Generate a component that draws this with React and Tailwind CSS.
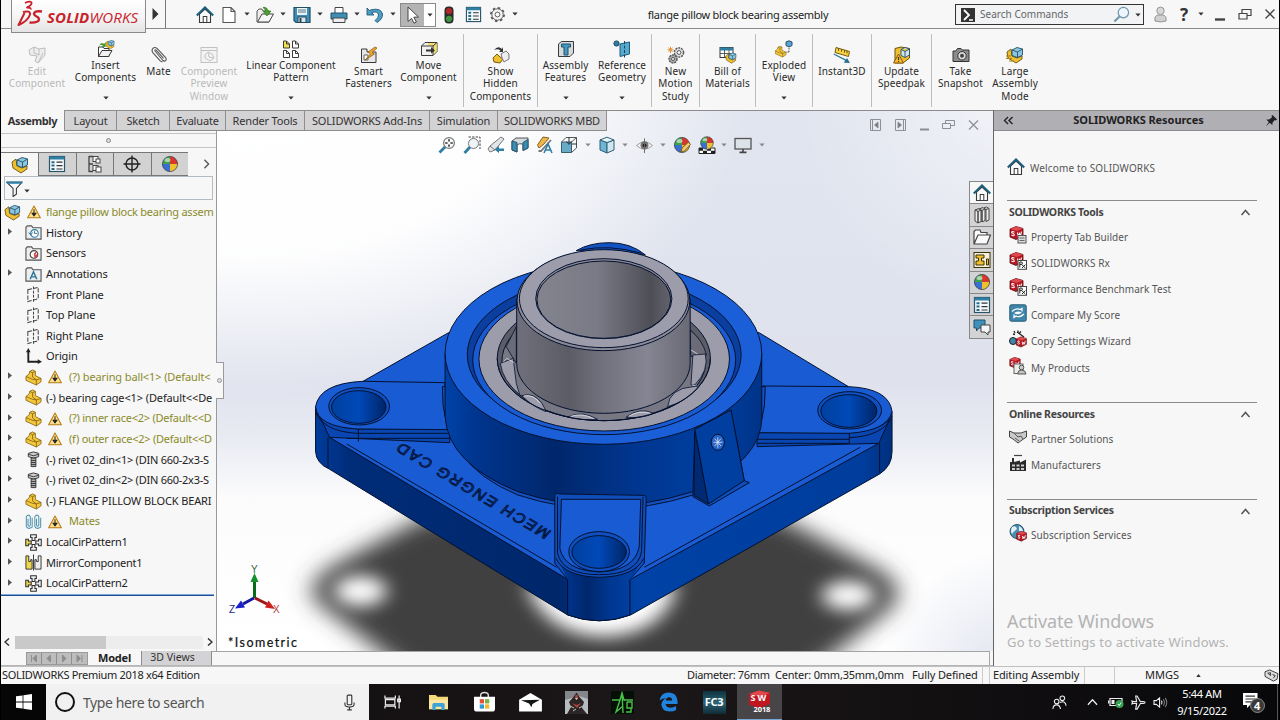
import React from "react";

// ICONS - all drawn on an 18x18 grid

const teal = "#2f7fa3";
const ink = "#3a3a3a";
const yellow = "#f0c030";

const PartShape = () => (
  <g stroke="#7a5a10" strokeWidth="0.8" strokeLinejoin="round">
    <path d="M1 8 L4.5 5 L5 2.5 L8 1 L11 2.5 V7 L17 10 V13.5 L12 17 L1 12Z" fill="#f3c73c" />
    <path d="M5 2.5 L8 4 L11 2.5 M8 4 V8.5 L12 11.5 L17 10 M12 11.5 V17 M1 8 L8 11 L12 11.5" fill="none" />
  </g>
);

const AssemblyShape = () => (
  <g strokeLinejoin="round">
    <path d="M1 6 L5 3 L6 10 L11 12 L16 10 V13 L10 17 L2 12Z" fill="#f0bf2f" stroke="#6b4f0c" strokeWidth="0.9" />
    <path d="M6 4 L11 1.5 L16.5 3 V9 L11.5 11.5 L6 9.5Z" fill="#8cc7e2" stroke="#244f66" strokeWidth="0.9" />
    <path d="M6 4 L11.5 6 L16.5 3 M11.5 6 V11.5" fill="none" stroke="#244f66" strokeWidth="0.9" />
  </g>
);

const SwCube = () => (
  <g>
    <path d="M1 3 L7 0.5 L14 2.5 V10 L7 13.5 L1 11Z" fill="#b5161f" stroke="#5e0a10" strokeWidth="0.8" />
    <path d="M1 3 L8 5 L14 2.5 L7 0.5Z" fill="#dd4a50" />
    <path d="M5.5 6.2 q-3 -1.5 -2.8 0.6 q2.8 1 2.6 2.4 q-0.8 1.2 -2.8 -0.2 M8.5 6.5 l0.8 4 l1.2 -3 l1 2.4 l1 -4.4" stroke="#fff" strokeWidth="1.1" fill="none" />
  </g>
);

const BallShape = () => (
  <g>
    <circle cx="9" cy="9" r="7.6" fill="#2f62bf" />
    <path d="M9 9 V1.4 A7.6 7.6 0 0 0 1.4 9Z" fill="#3ea24a" />
    <path d="M9 9 V1.4 A7.6 7.6 0 0 1 16.6 9Z" fill="#d8352c" />
    <path d="M9 9 H1.4 A7.6 7.6 0 0 0 9 16.6Z" fill="#3a6fd0" />
    <path d="M9 9 H16.6 A7.6 7.6 0 0 1 9 16.6Z" fill="#edc02d" />
    <ellipse cx="6.5" cy="5" rx="3" ry="2" fill="#fff" opacity="0.55" />
    <circle cx="9" cy="9" r="7.6" fill="none" stroke="#444" strokeWidth="0.7" />
  </g>
);

// four small brackets around an open centre
const CirPatternShape = () => (
  <g stroke="#2e2e2e" strokeWidth="1.1" fill="#eee">
    <path d="M6 0.8 h6 v3 h-1.5 v3 h-3 v-3 h-1.5z" />
    <path d="M6 17.2 h6 v-3 h-1.5 v-3 h-3 v3 h-1.5z" />
    <path d="M0.8 5.5 h2.8 v2 h3 v3 h-3 v2 h-2.8z" fill="#ecd94d" />
    <path d="M17.2 5.5 h-2.8 v2 h-3 v3 h3 v2 h2.8z" />
  </g>
);

const ListShape = () => (
  <g>
    <rect x="1.5" y="1.5" width="15" height="15" fill="#f4fafc" stroke="#2c5468" strokeWidth="1.2" />
    <rect x="1.5" y="1.5" width="15" height="3" fill={teal} />
    <path d="M3.5 6.2h3v2h-3z M3.5 9.6h3v2h-3z M3.5 13h3v2h-3z" fill="#2a6884" />
    <path d="M8.5 7.2h6 M8.5 10.6h6 M8.5 14h6" stroke="#333" strokeWidth="1.2" />
  </g>
);

const FolderShape = () => (
  <path d="M1 16 V3.5 L2.5 2 H7 L8.5 4 H17 V16Z" fill="#eceef0" stroke="#555" strokeWidth="1.2" />
);

const glyphs = {
  home: (
    <g>
      <path d="M3.5 8 V16.5 H14.5 V8 L9 3Z" fill="#fafafa" stroke={ink} strokeWidth="1.1" />
      <path d="M0.8 9.5 L9 1.5 L17.2 9.5" fill="none" stroke="#1f5f7b" strokeWidth="2.2" />
      <rect x="7.2" y="10.5" width="3.6" height="6" fill="#fff" stroke={ink} />
    </g>
  ),
  page: <path d="M3 1.5 H11 L15 5.5 V16.5 H3Z M11 1.5 V5.5 H15" fill="#fff" stroke="#555" strokeWidth="1.1" />,
  open: (
    <g>
      <path d="M1 16 V5 L3 3 H6 L7 5 H13 V16Z" fill="#eee" stroke="#555" />
      <path d="M1.5 16 L6 8 H17.5 L13 16Z" fill="#f6f6f6" stroke="#444" />
      <path d="M7 1.5 Q11 0.5 12 5 H15 L11 10 L7.2 5.5 H9.5 Q9.5 3 7 1.5Z" fill="#4aa32f" stroke="#2a6a18" strokeWidth="0.6" />
    </g>
  ),
  save: (
    <g>
      <path d="M1 1.5 H17 V16.5 H3 L1 14.5Z" fill="#3f8fb5" stroke="#1f4e66" strokeWidth="1.2" />
      <rect x="4" y="2" width="10" height="7" fill="#e9f3f8" />
      <path d="M5 4h8M5 6h8" stroke="#4c6a78" strokeWidth="0.9" />
      <rect x="5" y="11" width="8" height="5.5" fill="#dfe6ea" stroke="#24495c" />
      <rect x="6.5" y="12" width="2" height="4" fill="#24495c" />
    </g>
  ),
  print: (
    <g>
      <path d="M5 7 V1.5 H13 V7" fill="#fff" stroke="#444" />
      <path d="M1 7 H17 V13 H1Z" fill="#3f8fb5" stroke="#1f4e66" />
      <path d="M3 12 H15 V16.5 H3Z" fill="#eee" stroke="#444" />
    </g>
  ),
  undo: <path d="M1 2 V9 H8 L5.5 6.6 Q12 4.5 12.5 9 Q12.5 12 9 14.5 L11 16.5 Q17 13 16.5 8 Q15 1.5 5 3.8 L3.5 4.5Z" fill="#4d9dc4" stroke="#1f5b7a" strokeWidth="0.9" />,
  cursor: <path d="M4 1 L14.5 11 L9.8 11.2 L12.4 16 L10 17.2 L7.6 12.4 L4 15.5Z" fill="#fff" stroke="#444" strokeWidth="1" />,
  traffic: (
    <g>
      <rect x="4.5" y="0.5" width="9" height="17" rx="4" fill="#2b2b2b" />
      <circle cx="9" cy="5" r="3.1" fill="#b3262b" />
      <circle cx="9" cy="12.8" r="3.1" fill="#3f9440" />
    </g>
  ),
  list: <ListShape />,
  gear: (
    <g fill="none" stroke="#555">
      <circle cx="9" cy="9" r="7" strokeWidth="1.8" strokeDasharray="2.7 2.8" />
      <circle cx="9" cy="9" r="6" fill="#f7f7f7" strokeWidth="1" />
      <circle cx="9" cy="9" r="2.6" />
    </g>
  ),
  editComponent: (
    <g fill="#ededed" stroke="#bdbdbd">
      <path d="M1 4 L6 1 L11 3 L17 2 L17 9 L10 17 L7 15 L9 10 L2 9Z" />
      <path d="M6 1 V7 L11 9 M10 17 L15 7 M11 3 V9" fill="none" />
    </g>
  ),
  insertComponents: (
    <g>
      <path d="M1.5 16.5 V7 H6 L7 8.5 H12 V16.5Z" fill="#fff" stroke={ink} />
      <path d="M1.5 16.5 L5 10.5 H15 L11.5 16.5Z" fill="#f1f1f1" stroke={ink} />
      <path d="M2 6 Q4 1 7 4 L8.5 2.5 V7 H4.5 L6 5.5 Q4 4 2 6Z" fill="#3f9a2a" />
      <g transform="translate(8 -0.5) scale(0.55)">
        <AssemblyShape />
      </g>
    </g>
  ),
  mate: <path d="M5 5 L12.5 14 Q14.5 16 15.8 14.4 Q16.8 13 15.2 11 L7 2.4 Q4.6 0.6 2.8 2.6 Q1.2 4.5 3 6.8 L10 14.6 Q11.5 16 12.4 15.6 M5 5 Q4.5 3.6 6 4 L13.5 12.4" fill="none" stroke="#555" strokeWidth="1.1" />,
  previewWindow: (
    <g fill="#f3f3f3" stroke="#c2c2c2">
      <rect x="1" y="1.5" width="16" height="15" />
      <path d="M1 4.5h16" />
      <path d="M5 9 L8 6 L12 8 L14 12 L10 15 L5 12Z M8 6 L9 11 L14 12" />
    </g>
  ),
  linearPattern: (
    <g stroke="#3b3b3b" strokeWidth="1" fill="#fff">
      <path d="M1.5 1 h3 l3 3 v4 h-6z" fill="#f0e04f" />
      <path d="M10.5 1 h3 l3 3 v4 h-6z M1.5 10.500 h3 l3 3 v4 h-6z M10.5 10.500 h3 l3 3 v4 h-6z" />
      <path d="M4.5 1 v3 h3 M13.5 1 v3 h3 M4.5 10.500 v3 h3 M13.5 10.500 v3 h3" fill="none" />
    </g>
  ),
  smartFasteners: (
    <g>
      <path d="M1.5 16.5 V3 H7 V6 H16 V16.5Z" fill="#e6e6e6" stroke={ink} />
      <path d="M4 9 h4 v5 h-4z" fill="#fff" stroke="#666" />
      <path d="M15 1 L8 6 L10.5 8 L5 14 L14.5 8 L12 6.5 L17 2Z" fill="#f0a52f" stroke="#83530d" strokeWidth="0.7" />
    </g>
  ),
  moveComponent: (
    <g>
      <path d="M1.5 6 L5 2.5 H17 V11.5 L13 15.5 H1.5Z" fill="#f1f1f1" stroke={ink} />
      <path d="M8 3 H17 V11 L13 15 V6 H8Z" fill="#f2dc55" opacity="0.8" />
      <path d="M1.5 6 H13 V15.5 M13 6 L17 2.5" fill="none" stroke={ink} />
      <path d="M6 9.500 H11 V7 L15 10.500 L11 13.500 V11.500 H6Z" fill="#333" />
    </g>
  ),
  showHidden: (
    <g>
      <path d="M2 4 Q6 -1 10 3 L11 1 V6 H7 L8.5 4.6 Q5.5 2.2 2 4Z" fill="#333" />
      <path d="M1 12 L5 8 L8 11 L11 13 L8 17 L2 16Z" fill="#f0bf2f" stroke="#7a5a10" />
      <path d="M9 8 L14 5 L17 8 V13 L12 16 L10 12Z" fill="#eee" stroke="#777" />
    </g>
  ),
  assemblyFeatures: (
    <g>
      <path d="M1.5 4 L4.5 1.5 H16.5 V13 L13 16.5 H1.5Z" fill="#d6dadd" stroke={ink} />
      <path d="M4.5 4 H13.5 V7 H11 V15 H7 V7 H4.5Z" fill="#4798bd" stroke="#1f526b" />
    </g>
  ),
  referenceGeometry: (
    <g>
      <circle cx="3.5" cy="3.5" r="2.6" fill={teal} stroke="#1d4a60" />
      <path d="M7 4 L16.5 2 V14 L7 16.5Z" fill="#56a9cf" stroke="#1f5b7a" />
      <path d="M11.5 1 V17.5" stroke="#174257" strokeDasharray="3 1.5" />
    </g>
  ),
  motionStudy: (
    <g fill="#ddd" stroke="#555">
      <circle cx="12" cy="6.5" r="4.6" strokeWidth="1.4" strokeDasharray="2 0.9" />
      <circle cx="12" cy="6.5" r="1.9" fill="#fff" />
      <circle cx="6" cy="13" r="4" strokeWidth="1.4" strokeDasharray="2 0.9" fill="#aaa" />
      <circle cx="6" cy="13" r="1.5" fill="#fff" />
      <path d="M3.5 0.8 V7 M0.5 3.8 H6.6 M1.4 1.6 L5.6 6 M5.6 1.6 L1.4 6" stroke="#e08b2a" strokeWidth="0.9" />
    </g>
  ),
  billOfMaterials: (
    <g>
      <rect x="1" y="1.5" width="13" height="10" fill="#fff" stroke={ink} />
      <rect x="1" y="1.5" width="13" height="3" fill={teal} />
      <path d="M1 7.5h13 M5.5 4v7.5 M10 4v7.5" stroke={ink} strokeWidth="0.8" />
      <g transform="translate(6 6) scale(0.66)">
        <AssemblyShape />
      </g>
    </g>
  ),
  explodedView: (
    <g>
      <g transform="translate(-0.5 5.5) scale(0.68)">
        <PartShape />
      </g>
      <path d="M11 2 L14 0.8 L17 2 V5.5 L14 7 L11 5.5Z" fill="#5aa6d0" stroke="#235069" />
      <path d="M14 8 V13 M14 12 H11" stroke="#555" strokeDasharray="1.5 1" />
    </g>
  ),
  instant3d: (
    <g>
      <path d="M3 1.5 L16.5 5.5 L15.5 10.5 L2 6.5Z" fill="#f4d53f" stroke="#7a5a10" />
      <path d="M5.5 2.4 v2.4 M8.5 3.3 v2.4 M11.5 4.2 v2.4 M14 5 v2.4" stroke="#6b4f0c" />
      <path d="M0.5 8.5 L12 14.5 L11 16.8 L17 17 L14 12 L13 13.5 L1 7.5Z" fill="#2b7097" />
    </g>
  ),
  updateSpeedpak: (
    <g>
      <path d="M2 2.500 L8 1 L16.500 2.500 V12 L10 17 H2Z" fill="#f0bf2f" stroke="#6b4f0c" />
      <path d="M8 3.500 L12 1.500 L16.500 3 V9 L12 11.500 L8 9.500Z M8 3.500 L12 5.500 L16.500 3 M12 5.500 V11.500" fill="#cfe6f1" stroke="#244f66" strokeWidth="0.9" />
      <path d="M5.5 8 L10.5 17 H0.5Z" fill="#f5b92e" stroke="#8a5a0c" />
      <path d="M5.5 11 V14 M5.5 15 V16" stroke="#333" strokeWidth="1.2" />
    </g>
  ),
  camera: (
    <g>
      <path d="M1 5 H4 L5.5 2.5 H9 L10.5 4 H17 V15.5 H1Z" fill="#8c8c8c" stroke="#333" />
      <circle cx="10" cy="9.8" r="4.2" fill="#ddd" stroke="#333" />
      <circle cx="10" cy="9.8" r="2" fill="#444" />
    </g>
  ),
  largeAssembly: (
    <g>
      <AssemblyShape />
      <path d="M0 10h5 M0 12.5h6 M3 15h5" stroke="#a3821c" />
    </g>
  ),
  assembly: <AssemblyShape />,
  part: <PartShape />,
  ball: <BallShape />,
  configs: (
    <g fill="#fff" stroke="#444">
      <path d="M3 1.5 H7 M3 1 V17 M3 16.5 H7 M3 9 H7" fill="none" strokeWidth="1.3" />
      <rect x="7" y="1.5" width="5" height="5" />
      <rect x="10" y="4" width="4" height="4" />
      <rect x="7" y="10.5" width="5" height="5" />
      <rect x="10" y="12" width="5" height="5" />
    </g>
  ),
  dimxpert: (
    <g fill="none" stroke="#222" strokeWidth="1.4">
      <circle cx="9" cy="9" r="6" />
      <path d="M9 0.5V17.5 M0.5 9H17.5" />
    </g>
  ),
  filter: (
    <g>
      <path d="M1 2.5 H17 L11 9 V15 L7.5 17.5 V9Z" fill="#f4f7f9" stroke="#333" strokeWidth="1.1" />
      <path d="M1 1.5 H17 V4 H1Z" fill={teal} />
    </g>
  ),
  warning: (
    <g>
      <path d="M9 1.2 L17.200 16.500 H0.800Z" fill="#ffe08a" stroke="#b57a14" strokeWidth="1.3" strokeLinejoin="round" />
      <path d="M9 5.500 V11 M6.500 10.500 L9 14 L11.500 10.500Z" stroke="#222" strokeWidth="1.3" fill="#222" />
    </g>
  ),
  history: (
    <g>
      <FolderShape />
      <circle cx="10" cy="10" r="4" fill="#fff" stroke={teal} strokeWidth="1.2" />
      <path d="M10 7.5 V10 H12.5 M4 9 L6 11.5 L8 9" stroke="#2a6884" fill="none" />
    </g>
  ),
  sensors: (
    <g>
      <FolderShape />
      <circle cx="9.5" cy="10" r="4" fill="#fff" stroke="#444" strokeWidth="1.2" />
      <path d="M9.5 10 L12 7.6" stroke="#c33" strokeWidth="1.4" />
      <path d="M9.5 10 H13.5 A4 4 0 0 1 10 14Z" fill="#c94b4b" />
    </g>
  ),
  annotations: (
    <g>
      <FolderShape />
      <path d="M5.5 14 L9 6 L12.5 14 M6.8 11.5 H11.2" fill="none" stroke="#2a7296" strokeWidth="1.5" />
    </g>
  ),
  plane: (
    <g fill="none" stroke="#444" strokeWidth="1.1">
      <path d="M3 4 L14 1.5 V13.5 L3 16.5Z" strokeDasharray="4.5 1.6" />
      <path d="M9 0.5 V17" strokeDasharray="3 1.4" />
    </g>
  ),
  origin: (
    <g fill="#222">
      <path d="M3.5 3 V14.5 H14" fill="none" stroke="#222" strokeWidth="2" />
      <path d="M1 4.5 L3.5 0 L6 4.5Z M13.5 12 L18 14.5 L13.5 17Z" />
    </g>
  ),
  rivet: (
    <g stroke="#333">
      <path d="M3.5 2.5 Q9 -0.5 14.5 2.5 V6 Q9 9 3.5 6Z" fill="#cfcfcf" />
      <path d="M6.5 7.5 H11.5 V16.5 H6.5Z" fill="#b5b5b5" />
      <path d="M6.5 10h5 M6.5 12.2h5 M6.5 14.4h5 M3.5 3.5 Q9 6.5 14.5 3.5" fill="none" />
    </g>
  ),
  mates: (
    <g fill="none" stroke="#4c93ad" strokeWidth="1.1">
      <path d="M3.2 6 V13 Q4.5 15 5.6 13 V4 Q3.8 0.5 1.4 4 V14 Q3 18 7.6 15 V5" />
      <path d="M12.2 6 V13 Q13.5 15 14.6 13 V4 Q12.8 0.5 10.4 4 V14 Q12 18 16.6 15 V5" />
    </g>
  ),
  cirPattern: <CirPatternShape />,
  mirror: (
    <g stroke="#333" strokeWidth="1">
      <path d="M1 2 h3 v6 h2 v-2 h1.5 v10 h-6.500z" fill="#ecd94d" />
      <path d="M17 2 h-3 v6 h-2 v-2 h-1.5 v10 h6.500z" fill="#eee" />
      <path d="M9 0.5 V17.5" />
    </g>
  ),
  zoomFit: (
    <g>
      <path d="M7.5 10.5 L1.5 16.5" stroke={teal} strokeWidth="2.8" />
      <circle cx="11" cy="7" r="5.4" fill="#f6fafc" stroke="#777" strokeWidth="1.2" />
      <path d="M11 3.2v2.4M11 8.4v2.4M7.2 7h2.4M12.4 7h2.4" stroke="#333" strokeWidth="1.6" />
    </g>
  ),
  zoomArea: (
    <g>
      <path d="M7 11 L1.5 17" stroke={teal} strokeWidth="2.8" />
      <circle cx="10.5" cy="7.5" r="5" fill="#eef5f8" stroke="#777" />
      <path d="M5.5 1 H17 V13" fill="none" stroke="#444" strokeDasharray="2.4 1.2" />
    </g>
  ),
  prevView: (
    <g>
      <path d="M14 1 L17 3 L8 14 L3 16 L1 13 L3 10Z" fill="#e3e6e8" stroke="#777" />
      <path d="M3 10 L8 14" stroke="#777" />
      <path d="M17 12.5 H12 V10 L7.5 13.5 L12 17 V15 H17Z" fill={teal} />
    </g>
  ),
  section: (
    <g>
      <path d="M1 5 L5 2 H17 V12 L12 14.500 V8 Q8 7 6 9 V16 L1 14Z" fill="#d5dade" stroke="#555" />
      <path d="M1 5 L6 6.500 V16 L1 14Z M12 6.500 L17 3.500 V12 L12 14.500Z" fill="#3b8db3" stroke="#29576d" />
    </g>
  ),
  dynamicAnnot: (
    <g>
      <path d="M7 1 L13 2 L8 8 L3 12 L1.5 9Z" fill="#f0b648" stroke="#83602a" />
      <path d="M15 4 L5 15 L2.5 15" fill="none" stroke="#777" strokeWidth="1.8" />
      <path d="M8 17 L12 8 L16 17 M9.5 14 H14.5" fill="none" stroke={teal} strokeWidth="1.6" />
    </g>
  ),
  orientation: (
    <g>
      <path d="M1.5 6 H11.5 V16.5 H1.5Z" fill="#67abc9" stroke="#3a5f70" />
      <path d="M1.5 6 L6 1.5 H16.5 V12 L11.5 16.5 M11.5 6 L16.5 1.5" fill="none" stroke="#555" />
      <path d="M9 1 V8 M6.5 5.5 L9 8.5 L11.5 5.5 M17 8 H12" fill="none" stroke="#333" />
    </g>
  ),
  displayStyle: (
    <g stroke="#2f5f75">
      <path d="M2 4 L9 6.5 V17 L2 14Z" fill="#6fb5d4" />
      <path d="M9 6.5 L16 4 V14 L9 17Z" fill="#cfe5ef" />
      <path d="M2 4 L9 1.2 L16 4 L9 6.5Z" fill="#eaf4f8" />
    </g>
  ),
  eye: (
    <g>
      <path d="M0.500 9 Q9 1 17.500 9 Q9 17 0.500 9Z" fill="#f1f1f1" stroke="#999" />
      <circle cx="9" cy="8.8" r="4.2" fill="#777" />
      <circle cx="9" cy="8.8" r="2" fill="#222" />
      <path d="M9 1.5V17" stroke="#666" />
    </g>
  ),
  appearance: (
    <g>
      <BallShape />
      <path d="M8 16 L9 12 L15.5 6 L17.5 8.5 L11.5 15Z" fill="#efc877" stroke="#7a5a10" />
    </g>
  ),
  scene: (
    <g>
      <path d="M1 12 H17 V17.5 H1Z" fill="#fff" stroke="#222" />
      <path d="M1 12h4v2.7H1z M9 12h4v2.7H9z M5 14.7h4v2.8H5z M13 14.7h4v2.8h-4z" fill="#222" />
      <g transform="translate(1.5 -0.5) scale(0.83)">
        <BallShape />
      </g>
    </g>
  ),
  monitor: (
    <g>
      <rect x="1" y="2.5" width="16" height="10.5" fill="#dbe3e8" stroke="#555" strokeWidth="1.3" />
      <path d="M9 13V16M5.5 16.4H12.5" stroke="#444" strokeWidth="1.6" />
    </g>
  ),
  library: (
    <g fill="#eee" stroke="#444">
      <path d="M2 4 L5 5.5 V17 L2 15Z M5 5.5 L8 4 V15.5 L5 17Z M6 3 L9 4.5 V16 M9 4.5 L12 3 V14.5 L9 16Z M10.5 2 L13 3.5 V15.5 L16 14 V2.5 L13 3.5 M2 4 L6 2.5 M6 3 L10 1.5 M10.5 2 L13.5 1 L16 2.5" />
    </g>
  ),
  folderOpen: <path d="M1 16 V3.5 L2.5 2 H7 L8 4.5 H14 V7 H17.5 L14 16Z M1 16 L5 7 H14" fill="#fafafa" stroke="#444" strokeWidth="1.2" />,
  viewPalette: (
    <g fill={yellow} stroke="#3c3208">
      <rect x="1" y="1.5" width="16" height="15" fill="#f4efd8" />
      <path d="M3 4h8v3h-2.5v3H11v4H3v-4h2.5V7H3z M13.5 8h2v6h-2z" />
    </g>
  ),
  forum: (
    <g>
      <path d="M1 2 H12 V10 H6 L3.5 13 V10 H1Z" fill="#3f91ba" stroke="#1f526b" />
      <path d="M8 7 H17 V14 H15 V17 L12 14 H8Z" fill="#f4f6f7" stroke="#444" />
    </g>
  ),
  swTab: (
    <g>
      <SwCube />
      <rect x="9" y="9.5" width="8" height="7.5" fill="#ddd" stroke="#555" />
      <path d="M10.5 12h5M10.5 14.5h5" stroke="#666" />
    </g>
  ),
  swRx: (
    <g>
      <SwCube />
      <rect x="9" y="8.5" width="8.5" height="8.8" fill="#fff" stroke="#444" />
      <path d="M10.8 15.5 V10 H12.8 Q14 11.2 12.8 12.4 H10.8 M12.5 12.4 L16.4 16 M16.4 12.6 L13 16" stroke="#222" strokeWidth="1" fill="none" />
    </g>
  ),
  compare: (
    <g>
      <rect x="0.8" y="0.8" width="16.4" height="16.4" rx="1.5" fill="#3f86aa" stroke="#1f5a79" />
      <path d="M3 7.500 Q7 3.500 11 5.500 L13 4.500 V7.500 M15 10 Q11 14 7 12 L5 13.500 V10.500" fill="none" stroke="#fff" strokeWidth="1.3" />
      <path d="M5 9 Q9 6 13 8.800 Q9 11.500 5 9Z" fill="#fff" />
    </g>
  ),
  wizard: (
    <g>
      <circle cx="4" cy="11" r="3.5" fill="#3f86aa" stroke="#222" />
      <g transform="translate(6.5 6.5) scale(0.78)">
        <SwCube />
      </g>
      <path d="M15 7 L8 2 M5 1l1 2M9 0.5v2M12 1.5l-1.5 1.5M4 4l2 .5" stroke="#222" strokeWidth="1.3" />
    </g>
  ),
  products: (
    <g>
      <g transform="scale(0.8)">
        <SwCube />
      </g>
      <rect x="5" y="7" width="9" height="9.5" fill="#e9efe6" stroke="#666" />
      <circle cx="12.5" cy="10.5" r="2.3" fill="#ccc" stroke="#555" />
      <path d="M8.5 17 Q9 13 12.5 13 Q16.5 13 17 17Z" fill="#c4c4c4" stroke="#555" />
    </g>
  ),
  handshake: (
    <g>
      <path d="M0.5 3 L5 5 H12 L17.5 3 V9 L13 12 L9 15 L4 11 L0.5 9Z" fill="#c9c9c9" stroke="#444" />
      <path d="M5 5 L9 9 L12 8 L14 11 M6 10 L10 13" fill="none" stroke="#555" />
    </g>
  ),
  factory: (
    <g>
      <path d="M1 17 V8 H3 V4 H5 V8 L11 6.5 V8.5 L17 5.5 V17Z" fill="#2b2b2b" />
      <path d="M3 10.5h3v2H3z M7.5 10.5h3v2h-3z M12 10.5h3v2h-3z M3 14h3v2H3z M7.5 14h3v2h-3z M12 14h3v2h-3z" fill="#ccc" />
      <path d="M5 1.5h8" stroke="#444" strokeWidth="1.2" />
    </g>
  ),
  globe: (
    <g>
      <circle cx="8" cy="7.5" r="7" fill="#4c8fb4" stroke="#28546b" />
      <path d="M3 3 Q7 1 8 5 Q4 8 3 10 Q1 7 3 3Z M10 2 Q14 4 14 8 L10 7Z" fill="#e4eff4" />
      <g transform="translate(7 7) scale(0.75)">
        <SwCube />
      </g>
    </g>
  ),
};

const Icon = ({ name, className = "w-[18px] h-[18px]" }) => (
  <svg viewBox="0 0 18 18" className={`shrink-0 ${className}`}>
    {glyphs[name]}
  </svg>
);

const Caret = ({ className = "text-[#333]" }) => (
  <svg viewBox="0 0 8 5" className={`w-[6px] h-[4px] shrink-0 ${className}`}>
    <path d="M0.5 0.5 H7.5 L4 4.5Z" fill="currentColor" />
  </svg>
);

const Slot = ({ className, children }) => (
  <div className={`h-full flex items-center justify-center shrink-0 ${className}`}>{children}</div>
);

// TITLE BAR

const Logo = () => (
  <div className="absolute left-[10px] top-[-2px] w-[135px] h-[35px] border border-[#8a8a8a] bg-gradient-to-b from-white via-[#f6f6f6] to-[#e4e4e4] flex items-center z-10">
    <svg viewBox="0 0 28 30" className="w-[28px] h-[30px] ml-[4px] mt-[-4px]" fill="none" stroke="#c8232c" strokeLinejoin="round">
      <path d="M9 4 Q14 1.500 15.500 3.500 Q16 6 11 8.500 Q15.500 8.500 14.500 10.500" strokeWidth="1.800" />
      <path d="M7 13 Q14.500 11 14 15.500 Q12 22 2.500 26 L8.500 14" strokeWidth="2" />
      <path d="M26 12.500 Q19 11.500 18 14.500 Q18 16.500 21.500 18 Q24.500 20.500 21.500 22.500 Q18 24 13.500 23.500" strokeWidth="2.300" />
    </svg>
    <span className="ml-[3px] mt-[4px] text-[15px] italic text-[#c8232c] font-['Open_Sans',sans-serif] leading-none tracking-[0.150px] whitespace-nowrap">
      <b>SOLID</b>WORKS
    </span>
  </div>
);

const WindowButtons = () => (
  <svg viewBox="0 0 76 18" className="w-[76px] h-[18px] ml-[1px] shrink-0" fill="none" stroke="#444">
    <path d="M7 14.5 H17" strokeWidth="2.4" />
    <path d="M31 8.5 H39 V14 H31Z M34 8 V4.5 H43 V10.5 H39.5" strokeWidth="1.2" />
    <path d="M57.5 4.5 L66.5 13.5 M66.5 4.5 L57.5 13.5" strokeWidth="1.4" />
  </svg>
);

const TitleBar = () => (
  <div className="relative h-[29px] shrink-0 border-b border-[#8b8b8b] bg-[#f7f7f7] flex items-center">
    <Logo />
    <div className="w-[165px] h-full border-r border-[#777] flex items-center justify-end pr-[6px] shrink-0">
      <svg viewBox="0 0 6 12" className="w-[7px] h-[12px]">
        <path d="M0 0 L6 6 L0 12Z" fill="#333" />
      </svg>
    </div>
    <Slot className="w-[25px] ml-[26px] pt-px"><Icon name="home" /></Slot>
    <Slot className="w-[24px] pt-px"><Icon name="page" /></Slot>
    <Slot className="w-[12px]"><Caret /></Slot>
    <Slot className="w-[24px] pt-px"><Icon name="open" /></Slot>
    <Slot className="w-[12px]"><Caret /></Slot>
    <Slot className="w-[25px] pt-px"><Icon name="save" /></Slot>
    <Slot className="w-[12px]"><Caret /></Slot>
    <Slot className="w-[25px] pt-px"><Icon name="print" /></Slot>
    <Slot className="w-[11px]"><Caret /></Slot>
    <Slot className="w-[25px] pt-px"><Icon name="undo" /></Slot>
    <Slot className="w-[12px]"><Caret /></Slot>
    <div className="ml-[1px] mr-[1px] h-[24px] flex border border-[#8a8a8a] mt-[2px] shrink-0">
      <div className="w-[23px] bg-[#b4b4b4] flex items-center justify-center"><Icon name="cursor" /></div>
      <div className="w-[11px] bg-white flex items-center justify-center"><Caret /></div>
    </div>
    <Slot className="w-[24px] pt-px"><Icon name="traffic" /></Slot>
    <Slot className="w-[24px] pt-px"><Icon name="list" className="w-[17px] h-[17px]" /></Slot>
    <Slot className="w-[24px] pt-px"><Icon name="gear" className="w-[17px] h-[17px]" /></Slot>
    <Slot className="w-[12px]"><Caret /></Slot>
    <div className="w-[434px] text-center text-[11px] text-[#222] whitespace-nowrap pt-[2px] shrink-0 tracking-[-0.270px]">
      flange pillow block bearing assembly
    </div>
    <div className="w-[189px] h-[21px] border border-[#333] bg-[#f1f3f5] flex items-center shrink-0 mt-px">
      <svg viewBox="0 0 14 14" className="w-[14px] h-[14px] ml-[5px]">
        <rect width="14" height="14" fill="#333" />
        <path d="M3 2 L8 7 L3 12" stroke="#fff" strokeWidth="1.8" fill="none" />
        <path d="M8 12 H12" stroke="#fff" strokeWidth="1.5" />
      </svg>
      <span className="ml-[5px] text-[10px] text-[#666] tracking-[0.020px] whitespace-nowrap">Search Commands</span>
      <svg viewBox="0 0 18 18" className="w-[17px] h-[17px] ml-auto mr-[5px]">
        <path d="M7 11 L1.5 16.5" stroke="#6f95ad" strokeWidth="2.2" />
        <circle cx="11" cy="7" r="5.5" fill="#eef6fb" stroke="#6f95ad" strokeWidth="1.3" />
      </svg>
      <Caret className="text-[#333] mr-[2px]" />
    </div>
    <svg viewBox="0 0 14 18" className="w-[13px] h-[17px] ml-[10px] shrink-0">
      <path d="M1 16 V13 Q1 9.5 7 9.5 Q13 9.5 13 13 V16 Q7 18 1 16Z" fill="#d0d0d0" stroke="#8f8f8f" />
      <circle cx="7" cy="5" r="4" fill="#d8d8d8" stroke="#8f8f8f" />
    </svg>
    <span className="ml-[13px] text-[17px] font-bold text-[#333] leading-none">?</span>
    <Slot className="w-[12px] ml-[7px]"><Caret /></Slot>
    <WindowButtons />
  </div>
);

// RIBBON

const commands = [
  { icon: "editComponent", lines: ["Edit", "Component"], box: "w-[72px] text-[#b9b9b9]" },
  { icon: "insertComponents", lines: ["Insert", "Components"], menu: true, box: "w-[65px]" },
  { icon: "mate", lines: ["Mate"], box: "w-[41px]" },
  { icon: "previewWindow", lines: ["Component", "Preview", "Window"], box: "w-[60px] text-[#b9b9b9]" },
  { icon: "linearPattern", lines: ["Linear Component", "Pattern"], menu: true, box: "w-[104px]" },
  { icon: "smartFasteners", lines: ["Smart", "Fasteners"], box: "w-[51px]" },
  { icon: "moveComponent", lines: ["Move", "Component"], menu: true, box: "w-[70px]", rule: true },
  { icon: "showHidden", lines: ["Show", "Hidden", "Components"], box: "w-[74px]", rule: true },
  { icon: "assemblyFeatures", lines: ["Assembly", "Features"], menu: true, box: "w-[55px]" },
  { icon: "referenceGeometry", lines: ["Reference", "Geometry"], menu: true, box: "w-[59px]", rule: true },
  { icon: "motionStudy", lines: ["New", "Motion", "Study"], box: "w-[48px]", rule: true },
  { icon: "billOfMaterials", lines: ["Bill of", "Materials"], box: "w-[56px]", rule: true },
  { icon: "explodedView", lines: ["Exploded", "View"], menu: true, box: "w-[57px]", rule: true },
  { icon: "instant3d", lines: ["Instant3D"], box: "w-[59px]", rule: true },
  { icon: "updateSpeedpak", lines: ["Update", "Speedpak"], box: "w-[60px]", rule: true },
  { icon: "camera", lines: ["Take", "Snapshot"], box: "w-[57px]" },
  { icon: "largeAssembly", lines: ["Large", "Assembly", "Mode"], box: "w-[52px]" },
];

const Ribbon = () => (
  <div className="h-[81px] shrink-0 bg-[#f7f7f7] flex text-[#2a2a2a] pt-[5px] pb-[3px]">
    {commands.map(({ icon, lines, menu, box, rule }) => (
      <div
        key={icon}
        className={`${box} shrink-0 flex flex-col items-center ${menu ? "pt-[6px]" : "pt-[12px]"} ${
          rule ? "border-r border-[#bdbdbd]" : ""
        }`}
      >
        <Icon name={icon} />
        <div className="mt-[1px] text-[10px] leading-[12.3px] tracking-[0.120px] text-center whitespace-nowrap">
          {lines.map((line) => (
            <div key={line}>{line}</div>
          ))}
        </div>
        {menu && <div className="mt-auto mb-[7px] leading-none"><Caret /></div>}
      </div>
    ))}
  </div>
);

const tabs = [
  ["Layout", "w-[52px]"],
  ["Sketch", "w-[53px]"],
  ["Evaluate", "w-[56px]"],
  ["Render Tools", "w-[79px]"],
  ["SOLIDWORKS Add-Ins", "w-[125px]"],
  ["Simulation", "w-[68px]"],
  ["SOLIDWORKS MBD", "w-[110px]"],
];

const CommandTabs = () => (
  <div className="col-start-1 col-end-3 row-start-1 justify-self-start h-[21px] flex text-[11px] text-[#333] whitespace-nowrap z-10">
    <div className="w-[63px] bg-[#f7f7f7] font-bold flex items-center justify-center tracking-[-0.400px] pt-px">Assembly</div>
    {tabs.map(([label, width]) => (
      <div key={label} className={`${width} bg-[#d3d2d4] border-l border-y border-[#8d8d8d] last:border-r flex items-center justify-center tracking-[-0.180px] pt-px`}>
        {label}
      </div>
    ))}
  </div>
);

// FEATURE TREE

const treeRows = [
  { icon: "history", label: "History", open: true },
  { icon: "sensors", label: "Sensors" },
  { icon: "annotations", label: "Annotations", open: true },
  { icon: "plane", label: "Front Plane" },
  { icon: "plane", label: "Top Plane" },
  { icon: "plane", label: "Right Plane" },
  { icon: "origin", label: "Origin" },
  { icon: "part", label: "(?) bearing ball<1> (Default<", open: true, warn: true },
  { icon: "part", label: "(-) bearing cage<1> (Default<<De", open: true },
  { icon: "part", label: "(?) inner race<2> (Default<<D", open: true, warn: true, tight: true },
  { icon: "part", label: "(f) outer race<2> (Default<<D", open: true, warn: true, tight: true },
  { icon: "rivet", label: "(-) rivet 02_din<1> (DIN 660-2x3-S", open: true, tight: true },
  { icon: "rivet", label: "(-) rivet 02_din<2> (DIN 660-2x3-S", open: true, tight: true },
  { icon: "part", label: "(-) FLANGE PILLOW BLOCK BEARI", open: true },
  { icon: "mates", label: "Mates", open: true, warn: true },
  { icon: "cirPattern", label: "LocalCirPattern1", open: true, tight: true },
  { icon: "mirror", label: "MirrorComponent1", open: true, tight: true },
  { icon: "cirPattern", label: "LocalCirPattern2", open: true, tight: true },
];

const panelTabs = ["list", "configs", "dimxpert", "ball"];

const FeatureTree = () => (
  <div className="col-start-1 row-start-2 bg-[#f7f7f7] border-r border-[#9a9a9a] flex flex-col overflow-hidden">
    <div className="mt-[2px] h-[15px] border-y border-[#c4c4c4] flex items-center justify-center shrink-0">
      <div className="w-[5px] h-[5px] rounded-full border border-[#888] bg-[#ddd]" />
    </div>
    <div className="mt-[4px] h-[24px] flex shrink-0">
      <div className="w-[37px] border-t border-[#777] flex items-center justify-center"><Icon name="assembly" /></div>
      {panelTabs.map((name) => (
        <div key={name} className="w-[37.5px] bg-[#d2d2d2] border border-r-0 last:border-r border-[#777] flex items-center justify-center">
          <Icon name={name} />
        </div>
      ))}
      <svg viewBox="0 0 8 12" className="w-[7px] h-[10px] ml-[15px] mt-[7px]">
        <path d="M1.5 1 L6.5 6 L1.5 11" fill="none" stroke="#555" strokeWidth="1.6" />
      </svg>
    </div>
    <div className="ml-[3px] w-[209px] h-[24px] border border-[#b5bcc2] bg-[#f7f7f7] flex items-center shrink-0">
      <Icon name="filter" className="w-[17px] h-[17px] ml-[1px]" />
      <Caret className="text-[#333] mt-[6px] ml-[1px]" />
    </div>
    <div className="mt-[2px] w-[214px] overflow-hidden text-[11px] text-[#222] shrink-0">
      <div className="h-[20.64px] flex items-center text-[#8a8a28] whitespace-nowrap">
        <Icon name="assembly" className="w-[17px] h-[17px] ml-[3px]" />
        <Icon name="warning" className="w-[14px] h-[14px] ml-[6px]" />
        <span className="ml-[5px] tracking-[-0.230px]">flange pillow block bearing assem</span>
      </div>
      {treeRows.map(({ icon, label, open, warn, tight }) => (
        <div key={label} className={`h-[20.64px] flex items-center whitespace-nowrap ${warn ? "text-[#8a8a28]" : ""}`}>
          <div className="w-[24px] pl-[7px] shrink-0">
            {open && (
              <svg viewBox="0 0 5 8" className="w-[4px] h-[7px] mt-[-3px]">
                <path d="M0 0 L5 4 L0 8Z" fill="#555" />
              </svg>
            )}
          </div>
          <Icon name={icon} className="w-[17px] h-[17px]" />
          {warn && <Icon name="warning" className="w-[14px] h-[14px] ml-[6px] mr-[3px]" />}
          <span className={`ml-[4px] ${tight ? "tracking-[-0.250px]" : "tracking-[-0.120px]"}`}>{label}</span>
        </div>
      ))}
    </div>
    <div className="w-[213px] h-[2px] border-t border-[#7aa6d8] bg-[#1c4f93] shrink-0" />
    <div className="mt-auto mb-[2px] h-[14px] flex items-center justify-between w-[213px] shrink-0">
      <svg viewBox="0 0 6 8" className="w-[6px] h-[8px] ml-[3px]"><path d="M5 0.5 L1 4 L5 7.5" fill="none" stroke="#333" strokeWidth="1.5" /></svg>
      <div className="w-[188px] h-[13px] bg-[#ededed]"><div className="w-[91px] h-full bg-[#c9c9c9]" /></div>
      <svg viewBox="0 0 6 8" className="w-[6px] h-[8px] mr-[1px]"><path d="M1 0.5 L5 4 L1 7.5" fill="none" stroke="#333" strokeWidth="1.5" /></svg>
    </div>
  </div>
);

// VIEWPORT

const BearingModel = () => (
  <svg viewBox="217 110 776 541" className="col-start-2 row-start-1 row-end-3 w-[776px] h-[541px] [&_*]:[vector-effect:non-scaling-stroke]">
    <defs>
      <linearGradient id="sky" x1="0" y1="0" x2="0" y2="1">
        <stop offset="0" stopColor="#e1e5ef" />
        <stop offset="0.5" stopColor="#dfe2ed" />
        <stop offset="0.6" stopColor="#e8eaf2" />
        <stop offset="0.72" stopColor="#fcfcfd" />
        <stop offset="1" stopColor="#ffffff" />
      </linearGradient>
      <radialGradient id="glow" gradientUnits="userSpaceOnUse" cx="250" cy="90" r="500" gradientTransform="translate(0 30) scale(1 0.62)">
        <stop offset="0" stopColor="#fff" />
        <stop offset="0.55" stopColor="#fff" stopOpacity="0.95" />
        <stop offset="1" stopColor="#fff" stopOpacity="0" />
      </radialGradient>
      <radialGradient id="cornerGlow" gradientUnits="userSpaceOnUse" cx="1000" cy="110" r="200">
        <stop offset="0" stopColor="#fff" stopOpacity="0.5" />
        <stop offset="1" stopColor="#fff" stopOpacity="0" />
      </radialGradient>
      <radialGradient id="floorTint" gradientUnits="userSpaceOnUse" cx="1010" cy="680" r="130">
        <stop offset="0" stopColor="#dde1ed" />
        <stop offset="1" stopColor="#dde1ed" stopOpacity="0" />
      </radialGradient>
      <linearGradient id="hub">
        <stop offset="0" stopColor="#0042a8" />
        <stop offset="0.12" stopColor="#00338a" />
        <stop offset="0.35" stopColor="#00276c" />
        <stop offset="0.6" stopColor="#00368f" />
        <stop offset="0.85" stopColor="#003fa2" />
        <stop offset="1" stopColor="#003387" />
      </linearGradient>
      <linearGradient id="plateSide">
        <stop offset="0" stopColor="#003c9c" />
        <stop offset="0.06" stopColor="#002c78" />
        <stop offset="0.42" stopColor="#00276a" />
        <stop offset="0.47" stopColor="#003488" />
        <stop offset="0.56" stopColor="#0042a6" />
        <stop offset="0.95" stopColor="#003d9c" />
        <stop offset="1" stopColor="#002f7d" />
      </linearGradient>
      <linearGradient id="bore">
        <stop offset="0" stopColor="#00409f" />
        <stop offset="0.5" stopColor="#0049b8" />
        <stop offset="1" stopColor="#002567" />
      </linearGradient>
      <linearGradient id="sleeve">
        <stop offset="0" stopColor="#70707c" />
        <stop offset="0.3" stopColor="#5c5c66" />
        <stop offset="0.5" stopColor="#72727e" />
        <stop offset="0.75" stopColor="#858593" />
        <stop offset="1" stopColor="#6a6a75" />
      </linearGradient>
      <linearGradient id="sleeveBore">
        <stop offset="0" stopColor="#84848f" />
        <stop offset="0.45" stopColor="#7a7a86" />
        <stop offset="0.85" stopColor="#4e4e57" />
        <stop offset="1" stopColor="#62626c" />
      </linearGradient>
      <filter id="soft" x="-20%" y="-20%" width="140%" height="140%">
        <feGaussianBlur stdDeviation="32" />
      </filter>
      <filter id="softer" x="-60%" y="-60%" width="220%" height="220%">
        <feGaussianBlur stdDeviation="25" />
      </filter>
    </defs>
    <rect x="217" y="110" width="776" height="541" fill="url(#sky)" />
    <rect x="217" y="110" width="776" height="541" fill="url(#glow)" />
    <rect x="217" y="110" width="776" height="541" fill="url(#cornerGlow)" />
    <rect x="217" y="110" width="776" height="541" fill="url(#floorTint)" />
    <path d="M600 110.500 H993" stroke="#8b8b8b" />

    <g transform="translate(300 230) scale(0.389 0.3333)" stroke="#04112e" strokeWidth="1" strokeLinejoin="round">
      {/* floor shadow */}
      <g stroke="none">
        <path d="M320 860 L80 1010 Q-10 1085 70 1140 L290 1340 H1300 L1490 1160 Q1580 1090 1490 1020 L1230 860Z" fill="#3f3f3f" filter="url(#soft)" />
        <ellipse cx="155" cy="1083" rx="68" ry="46" fill="#fff" filter="url(#softer)" />
        <ellipse cx="1410" cy="1097" rx="68" ry="44" fill="#fff" filter="url(#softer)" />
        <path d="M580 1060 Q630 1215 780 1220 Q940 1215 970 1060Z" fill="#fff" filter="url(#softer)" />
      </g>

      {/* base plate */}
      <path d="M40 530 V665 Q42 700 75 717 L688 1155 Q770 1190 850 1155 L1490 732 Q1522 708 1522 665 V545Z" fill="url(#plateSide)" />
      <path d="M710 62 Q745 38 795 38 Q850 38 888 75Z" fill="#1253c4" />
      <path d="M722 60 Q795 42 878 70" fill="none" />
      <path d="M162 454 L382 308 H1180 L1410 470 L1200 660 H370Z" fill="#185bd3" />
      <path d="M76 622 L688 1048 H850 L1488 640 L1180 600 H380Z" fill="#185bd3" />
      <path d="M120 642 L660 1012 M885 1012 L1440 652" fill="none" />
      <path d="M72 622 V712 M1490 640 V728 M688 1048 V1153 M848 1048 V1155" fill="none" />

      {/* left lug */}
      <path d="M76 622 L385 638 V597 H150 Q80 594 48 552Z" fill="#0a46b2" />
      <path d="M372 458 L162 454 Q50 460 40 530 Q44 590 148 597 L385 599Z" fill="#185bd3" />
      <path d="M120 625 H385 M150 597 V635 M40 545 Q60 605 148 610 H385" fill="none" />
      <ellipse cx="152" cy="529" rx="78" ry="56" fill="#0f4fc0" />
      <ellipse cx="151" cy="531" rx="70" ry="49" fill="url(#bore)" />

      {/* right lug */}
      <path d="M1488 640 L1175 650 V608 H1410 Q1490 600 1515 570Z" fill="#0a46b2" />
      <path d="M1190 468 L1410 470 Q1515 475 1522 545 Q1510 602 1412 610 L1178 608Z" fill="#185bd3" />
      <path d="M1175 628 H1412 M1175 640 H1412 M1412 610 V640 M1522 560 Q1500 618 1412 623" fill="none" />
      <ellipse cx="1413" cy="541" rx="82" ry="56" fill="#0f4fc0" />
      <ellipse cx="1411" cy="543" rx="72" ry="49" fill="url(#bore)" />

      {/* hub */}
      <path d="M366 470 Q360 700 560 795 Q780 880 1010 795 Q1200 700 1196 470Z" fill="#144fbf" />
      <path d="M373 370 V560 Q380 700 560 785 Q780 870 1010 785 Q1190 690 1187 560 V370Z" fill="url(#hub)" />
      <ellipse cx="780" cy="370" rx="407" ry="273" fill="#1a5fd8" />
      <ellipse cx="782" cy="374" rx="352" ry="232" fill="#0a3f9f" />
      <ellipse cx="782" cy="390" rx="338" ry="224" fill="#185bd3" />
      <ellipse cx="782" cy="387" rx="322" ry="216" fill="#9c9cab" />
      <ellipse cx="781" cy="385" rx="274" ry="187" fill="#5d5d68" />
      <ellipse cx="781" cy="394" rx="262" ry="178" fill="#787884" />

      {/* balls and cage */}
      <g fill="#9c9cab" strokeWidth="0.8">
        <path d="M530 350 L556 290 V400Z M1003 300 Q1035 330 1045 375 L1005 380Z" fill="#6c6c78" />
        <path d="M515 400 L548 385 L556 460 L565 495 Q520 450 515 400Z" />
        <path d="M1010 375 L1042 372 Q1052 420 1015 465 L1005 465Z" />
        <path d="M523 395 L532 385 L550 398 M1005 360 L1022 372 M1008 465 L1025 470" stroke="#dcdce2" fill="none" />
        <path d="M570 497 Q600 485 622 520 Q630 535 632 545 Q598 530 570 497Z" />
        <path d="M688 561 Q725 540 765 568 Q720 572 688 561Z" />
        <path d="M838 562 Q872 530 910 550 Q880 566 838 562Z" />
        <path d="M945 530 Q950 475 1010 470 Q1030 465 1020 478 Q990 515 945 530Z" />
        <path d="M576 498 Q600 492 617 520 M696 559 Q725 548 755 566 M846 558 Q872 540 900 550" fill="none" stroke="#e5e5ea" />
      </g>
      <path d="M507 385 A274 187 0 0 0 1055 385" fill="none" />

      {/* inner sleeve */}
      <path d="M557 208 V400 A223 150 0 0 0 1003 400 V208Z" fill="url(#sleeve)" />
      <ellipse cx="780" cy="212" rx="222" ry="150" fill="#8a8a97" />
      <ellipse cx="781" cy="206" rx="217" ry="147" fill="#9c9cab" />
      <ellipse cx="781" cy="206" rx="175" ry="120" fill="#8a8a98" />
      <ellipse cx="781" cy="209" rx="172" ry="116" fill="url(#sleeveBore)" />

      {/* grease nipple rib */}
      <path d="M1015 598 L1108 540 L1142 752 L1155 758 L1052 828 L1010 800Z" fill="#0f4dbb" />
      <path d="M1015 598 L1050 822 L1013 797Z" fill="#002a74" />
      <path d="M1015 598 L1108 540 L1142 752 L1050 822Z" fill="#003f9f" />
      <ellipse cx="1074" cy="637" rx="17" ry="24" fill="#2766c8" />
      <path d="M1074 622 V653 M1063 637 H1086 M1066 626 L1082 648 M1082 626 L1066 648" stroke="#dfe8f5" strokeWidth="0.8" />

      {/* front lug */}
      <path d="M655 797 Q655 788 670 792 L880 796 Q892 796 890 808 L885 1000 L848 1048 H688 L655 1000Z" fill="#0f4dbb" />
      <path d="M661 985 Q680 1040 770 1042 Q860 1040 882 985 L850 1048 V1155 Q770 1190 688 1155 V1048Z" fill="url(#hub)" stroke="none" />
      <path d="M688 1048 V1155 Q770 1190 848 1155 V1048 M658 985 Q680 1040 770 1042 Q860 1040 884 985" fill="none" />
      <path d="M672 808 H876 L872 950 Q860 1022 770 1026 Q680 1022 668 955Z" fill="#185bd3" />
      <path d="M662 800 V970 Q675 1034 770 1034 Q868 1034 878 965 L882 800" fill="none" />
      <ellipse cx="769" cy="965" rx="78" ry="60" fill="#0f4fc0" />
      <ellipse cx="769" cy="966" rx="70" ry="49" fill="url(#bore)" />

      {/* embossed lettering, read from the far side */}
      <text
        transform="matrix(-0.83 -0.575 0.6 -0.78 648 905)"
        fill="#0c3f9c"
        stroke="#020c28"
        strokeWidth="0.800"
        fontSize="43"
        textLength="466"
        className="font-['Liberation_Sans',sans-serif]"
      >
        MECH ENGRG CAD
      </text>
    </g>

    {/* orientation triad */}
    <g strokeWidth="3">
      <path d="M254.500 598 V580" stroke="#0a6b1c" />
      <path d="M250.500 582 L254.500 573 L258.500 582Z" fill="#14902c" />
      <path d="M254 598 L243 604" stroke="#1418a0" />
      <path d="M235 608.500 L241 600.500 L245 607.500Z" fill="#1c20c8" />
      <path d="M255 598 L267 604" stroke="#a01414" />
      <path d="M275 609 L268.500 600.500 L265 607.500Z" fill="#d02020" />
    </g>
    <g fontSize="10" className="font-['Liberation_Sans',sans-serif]">
      <text x="251" y="573" fill="#2e6b34">Y</text>
      <text x="229" y="613" fill="#23238a">Z</text>
      <text x="273" y="613" fill="#b04040">X</text>
    </g>
    <text x="228" y="647" fontSize="12.500" fill="#111" stroke="#111" strokeWidth="0.200" textLength="69" className="font-['Lato',sans-serif]">*Isometric</text>
  </svg>
);

const ViewToolbar = () => (
  <div className="col-start-2 row-start-2 self-start justify-self-start ml-[218px] mt-[4px] h-[20px] flex items-center z-10">
    <Slot className="w-[24px]"><Icon name="zoomFit" /></Slot>
    <Slot className="w-[25px]"><Icon name="zoomArea" /></Slot>
    <Slot className="w-[24px]"><Icon name="prevView" /></Slot>
    <Slot className="w-[24px]"><Icon name="section" /></Slot>
    <Slot className="w-[25px]"><Icon name="dynamicAnnot" /></Slot>
    <Slot className="w-[24px]"><Icon name="orientation" /></Slot>
    <Slot className="w-[13px]"><Caret className="text-[#888]" /></Slot>
    <Slot className="w-[25px]"><Icon name="displayStyle" /></Slot>
    <Slot className="w-[12px]"><Caret className="text-[#888]" /></Slot>
    <Slot className="w-[26px]"><Icon name="eye" className="w-[17px] h-[17px]" /></Slot>
    <Slot className="w-[12px]"><Caret className="text-[#888]" /></Slot>
    <Slot className="w-[26px]"><Icon name="appearance" /></Slot>
    <Slot className="w-[23px]"><Icon name="scene" /></Slot>
    <Slot className="w-[12px]"><Caret className="text-[#888]" /></Slot>
    <Slot className="w-[26px]"><Icon name="monitor" /></Slot>
    <Slot className="w-[11px]"><Caret className="text-[#888]" /></Slot>
  </div>
);

const DocumentButtons = () => (
  <svg viewBox="0 0 112 14" className="col-start-2 row-start-1 justify-self-end mr-[11px] mt-[8px] w-[112px] h-[14px] z-10" fill="none" stroke="#8c8f96">
    <path d="M0.500 1.500 H10.500 V12.500 H0.500Z M2.500 1.500 V12.500 M25.500 1.500 H35.500 V12.500 H25.500Z M33.500 1.500 V12.500" />
    <path d="M8 4 L4.500 7 L8 10Z M28 4 L31.500 7 L28 10Z" fill="#777" />
    <path d="M50 11.500 H59" strokeWidth="2" />
    <path d="M72.500 5.500 H80.500 V10.500 H72.500Z M75.500 5 V2.500 H84.500 V7.500 H81" />
    <path d="M99 2.500 L108 11.500 M108 2.500 L99 11.500" strokeWidth="1.200" />
  </svg>
);

const paneTabs = ["home", "library", "folderOpen", "viewPalette", "ball", "list", "forum"];

const PaneTabs = () => (
  <div className="col-start-2 row-start-2 self-start justify-self-end mt-[50px] w-[24px] border-l border-t border-[#888] z-10">
    {paneTabs.map((name, i) => (
      <div key={name} className={`h-[22.400px] border-b border-[#888] flex items-center justify-center ${i === 0 ? "bg-[#f7f7f7]" : "bg-[#d3d2d4]"}`}>
        <Icon name={name} />
      </div>
    ))}
  </div>
);

const PanelHandle = () => (
  <div className="col-start-2 row-start-2 self-start justify-self-start mt-[231px] ml-[-1px] w-[8px] h-[37px] bg-[#f7f7f7] border border-l-0 border-[#9a9a9a] flex items-center justify-center z-10">
    <div className="w-[5px] h-[5px] rounded-full border border-[#999] bg-[#ddd]" />
  </div>
);

const ModelTabs = () => (
  <div className="h-[15px] bg-[#f7f7f7] flex text-[11px] text-[#333] border-b border-[#b5b5b5] shrink-0">
    <div className="ml-[25px] mt-[1px] h-[13px] flex border border-[#9a9a9a] bg-[#bdbdbd]">
      {["M4 2V9 M9 2 L5.500 5.500 L9 9Z", "M8 2 L4.500 5.500 L8 9Z", "M5 2 L8.500 5.500 L5 9Z", "M4 2 L7.500 5.500 L4 9Z M9 2V9"].map((d) => (
        <svg key={d} viewBox="0 0 13 11" className="w-[15px] h-[11px] border-r last:border-r-0 border-[#8f8f8f]">
          <path d={d} fill="#8d8d8d" stroke="#8d8d8d" />
        </svg>
      ))}
    </div>
    <div className="w-[53px] flex items-center justify-center font-bold text-[#222] tracking-[-0.200px]">Model</div>
    <div className="w-[71px] bg-[#d3d2d4] border-x border-[#8d8d8d] flex items-center justify-center text-[10.500px] tracking-[0px] pr-[8px]">3D Views</div>
    <div className="flex-1 border-t border-r border-[#a5a5a5] mr-[3px]" />
  </div>
);

// TASK PANE

const sections = [
  {
    title: "SOLIDWORKS Tools",
    box: "mt-[19px] h-[202px]",
    items: [
      ["swTab", "Property Tab Builder"],
      ["swRx", "SOLIDWORKS Rx"],
      ["swRx", "Performance Benchmark Test"],
      ["compare", "Compare My Score"],
      ["wizard", "Copy Settings Wizard"],
      ["products", "My Products"],
    ],
  },
  {
    title: "Online Resources",
    box: "h-[96.500px]",
    items: [
      ["handshake", "Partner Solutions"],
      ["factory", "Manufacturers"],
    ],
  },
  { title: "Subscription Services", box: "h-[90px]", items: [["globe", "Subscription Services"]] },
];

const TaskPane = () => (
  <div className="w-[286px] shrink-0 bg-[#f7f7f7] border-l border-[#666] flex flex-col">
    <div className="h-[21px] bg-[#b0b0b4] border-y border-[#8b8b8b] flex items-center shrink-0">
      <svg viewBox="0 0 12 10" className="w-[11px] h-[9px] ml-[9px]">
        <path d="M5.500 1 L1.500 5 L5.500 9 M10.500 1 L6.500 5 L10.500 9" fill="none" stroke="#222" strokeWidth="1.500" />
      </svg>
      <div className="flex-1 text-center text-[11px] font-bold text-[#222] tracking-[-0.060px] pr-[2px]">SOLIDWORKS Resources</div>
      <svg viewBox="0 0 14 14" className="w-[13px] h-[13px] mr-[1px]">
        <path d="M8 1 L13 6 L11.500 7 L10.500 6.500 L8 9.500 L8 12 L5 9.500 L1 13.500 L4 8.500 L1.500 6 L4.500 6 L7.500 3.500 L7 2Z" fill="#222" />
      </svg>
    </div>
    <div className="pl-[13px] pr-[22px] text-[10px] text-[#555] flex flex-col">
      <div className="mt-[24px] h-[26px] flex items-center shrink-0">
        <Icon name="home" className="w-[18px] h-[18px] mb-[3px]" />
        <span className="ml-[5px] mt-[1px] tracking-[0.150px]">Welcome to SOLIDWORKS</span>
      </div>
      {sections.map(({ title, box, items }) => (
        <div key={title} className={`${box} shrink-0 border-t border-[#8b8b8b]`}>
          <div className="h-[23px] pl-[2px] pr-[6px] flex items-center justify-between text-[10.500px] font-bold text-[#444] tracking-[-0.300px]">
            {title}
            <svg viewBox="0 0 10 7" className="w-[11px] h-[7px]">
              <path d="M1 6 L5 1.500 L9 6" fill="none" stroke="#555" strokeWidth="1.500" />
            </svg>
          </div>
          {items.map(([icon, label]) => (
            <div key={label} className="h-[26.200px] pl-[2px] flex items-center">
              <Icon name={icon} className="w-[18px] h-[18px] mb-[5px]" />
              <span className="ml-[4px] tracking-[0.050px]">{label}</span>
            </div>
          ))}
        </div>
      ))}
      <div className="mt-[20px] whitespace-nowrap text-[#b3b3b3]">
        <div className="text-[18px] leading-[24px] tracking-[-0.100px]">Activate Windows</div>
        <div className="text-[13px] leading-[18px] tracking-[0.190px]">Go to Settings to activate Windows.</div>
      </div>
    </div>
  </div>
);

// STATUS BAR

const StatusBar = () => (
  <div className="h-[18px] shrink-0 bg-[#f7f7f7] border-t border-[#c0c0c0] flex items-center text-[11px] text-[#222] whitespace-nowrap tracking-[-0.320px]">
    <div className="w-[685px] pl-px shrink-0">SOLIDWORKS Premium 2018 x64 Edition</div>
    <div className="w-[88px] pl-px shrink-0">Diameter: 76mm</div>
    <div className="w-[137px] pl-px shrink-0 tracking-[-0.220px]">Center: 0mm,35mm,0mm</div>
    <div className="w-[72px] pl-px h-full flex items-center border-r border-[#ccc] shrink-0 tracking-[-0.120px]">Fully Defined</div>
    <div className="w-[7px] h-full border-r border-[#ccc] shrink-0" />
    <div className="w-[95px] pl-[3px] h-full flex items-center border-r border-[#ccc] shrink-0 tracking-[-0.130px]">Editing Assembly</div>
    <div className="w-[30px] h-full border-r border-[#ccc] shrink-0" />
    <div className="w-[81px] pl-[30px] shrink-0 tracking-[0px]">MMGS</div>
    <svg viewBox="0 0 6 4" className="w-[5px] h-[3px] shrink-0"><path d="M0 4 L3 0 L6 4Z" fill="#333" /></svg>
    <svg viewBox="0 0 16 14" className="w-[15px] h-[13px] ml-auto shrink-0" fill="#ddd" stroke="#333">
      <path d="M1 3 L6 1 L15 5 L14 11 L10 13 L1 8Z" />
      <path d="M4 4.500 L7 4 L7 7Z M9 6 L12 7 L10 10" fill="none" />
    </svg>
  </div>
);

// TASKBAR

const Taskbar = () => (
  <div className="h-[36px] shrink-0 flex items-center text-white bg-linear-to-r from-[#0b0a0c] via-[#1c1718] to-[#08080a]">
    <div className="w-[45px] h-full bg-[#060607] flex items-center justify-center shrink-0">
      <svg viewBox="0 0 16 16" className="w-[16px] h-[16px]" fill="#fff">
        <path d="M0 2.300 L6.600 1.400 V7.600 H0Z M7.400 1.300 L16 0 V7.600 H7.400Z M0 8.400 H6.600 V14.600 L0 13.700Z M7.400 8.400 H16 V16 L7.400 14.700Z" />
      </svg>
    </div>
    <div className="w-[323px] h-full bg-[#f1f1f1] flex items-center shrink-0">
      <div className="w-[20px] h-[20px] ml-[9px] rounded-full border-[2.500px] border-[#111]" />
      <span className="ml-[8px] text-[14px] text-[#555] tracking-[-0.400px]">Type here to search</span>
      <svg viewBox="0 0 12 18" className="w-[11px] h-[17px] ml-auto mr-[14px]" fill="none" stroke="#333" strokeWidth="1.200">
        <rect x="3.500" y="1" width="5" height="10.500" rx="1" />
        <path d="M1 9 V11 Q1 14 6 14 Q11 14 11 11 V9 M6 14 V17 M3.500 17 H8.500" />
      </svg>
    </div>
    <Slot className="w-[46px]">
      <svg viewBox="0 0 18 16" className="w-[17px] h-[16px]" fill="none" stroke="#eee" strokeWidth="1.300">
        <path d="M1 1 V4 H12 V1 M1 15 V12.500 H12 V15 M1.500 5.500 H11.500 V11 H1.500Z M16 1 V15 M14.500 5 h3 v2.500 h-3z" />
      </svg>
    </Slot>
    <Slot className="w-[46px]">
      <svg viewBox="0 0 22 20" className="w-[21px] h-[19px]">
        <path d="M1 2 H8 L10 4 H21 V17 H1Z" fill="#f5d877" />
        <path d="M1 7 H21 V17 H1Z" fill="#fbe7a1" />
        <path d="M4.500 18 V12 Q5 10.500 6.500 10.500 H15.500 Q17.500 10.500 17.500 12 V18 H14 V14.500 H8 V18Z" fill="#3ea4d8" />
      </svg>
    </Slot>
    <Slot className="w-[46px]">
      <svg viewBox="0 0 22 22" className="w-[21px] h-[22px]">
        <path d="M7 6 V4 Q7 1 11 1 Q15 1 15 4 V6" fill="none" stroke="#ddd" strokeWidth="1.500" />
        <path d="M0 5.500 H22 V18 Q22 21 19 21 H3 Q0 21 0 18Z" fill="#fff" />
        <path d="M6 8h4.500v4.500H6z" fill="#e2523a" />
        <path d="M11.500 8H16v4.500h-4.500z" fill="#79b23f" />
        <path d="M6 13.500h4.500V18H6z" fill="#2c9bd6" />
        <path d="M11.500 13.500H16V18h-4.500z" fill="#f0b92f" />
      </svg>
    </Slot>
    <Slot className="w-[46px]">
      <svg viewBox="0 0 24 20" className="w-[23px] h-[19px]">
        <path d="M0 7 L12 0 L24 7 V19.500 H0Z" fill="#fff" />
        <path d="M2 7.500 L22 7 L14 11.500 L13 15 L10.500 11Z" fill="#151515" />
      </svg>
    </Slot>
    <Slot className="w-[46px]">
      <svg viewBox="0 0 23 23" className="w-[23px] h-[23px]">
        <rect width="23" height="23" fill="#b9bcbf" />
        <path d="M0 0 H23 V8 L14 5 L0 9Z" fill="#83878c" />
        <path d="M11.500 1.500 L14.500 6 L19 11 L17 17 L22 23 H2 L6 16 L4 11 L8.500 6Z" fill="#2b2526" />
        <path d="M10.500 4 L12.500 4 L13 7 L11.500 9 L10 7Z M7 12 L11.500 14 L16 12 L12 17Z" fill="#b04440" />
        <path d="M10 7 L13 7 L11.500 9Z" fill="#d8c8be" />
        <path d="M5 15 L9 17 M18 15 L14 17 M8 20 L11 18" stroke="#cfc6c0" />
      </svg>
    </Slot>
    <Slot className="w-[47px]">
      <svg viewBox="0 0 23 23" className="w-[23px] h-[23px]">
        <rect width="23" height="23" fill="#041006" />
        <path d="M1 9 H9 L11 2 L13 9 H22 M9 9 L5 21 L12 15 M11 2 L12 22 M16 11 V17 H21 V11 H16 M20 17 V21 H15" fill="none" stroke="#48c04a" strokeWidth="1.400" />
      </svg>
    </Slot>
    <Slot className="w-[45px]">
      <svg viewBox="0 0 20 20" className="w-[19px] h-[20px]">
        <path d="M0.500 8.500 Q2 0 10.500 0 Q19 0.500 19.500 9 V12 H7 Q7.500 16 12 16 Q15.500 16 18 14.300 V18.300 Q15.500 20 11 20 Q3 19.500 2.500 12.500 Q3 8 7.500 6 Q3.500 6 0.500 8.500Z M7.200 8.500 H13.800 Q13.800 5 10.500 5 Q7.500 5.200 7.200 8.500Z" fill="#2083dc" fillRule="evenodd" />
      </svg>
    </Slot>
    <Slot className="w-[46px]">
      <div className="w-[23px] h-[23px] bg-linear-to-b from-[#10323f] via-[#2b6475] to-[#102b36] flex items-center justify-center text-[11px] font-bold tracking-[-0.300px]">FC3</div>
    </Slot>
    <div className="w-[45px] h-full bg-[#474548] border-b border-[#76a9d6] flex items-center justify-center shrink-0">
      <div className="relative w-[24px] h-[23px]">
        <svg viewBox="0 0 24 23" className="w-[24px] h-[23px]">
          <path d="M1 4 L11 0.500 L22 3 V14 L12 18 L1 15Z" fill="#bf1720" />
          <path d="M1 4 L12 7 L22 3 L11 0.500Z" fill="#e2474c" />
        </svg>
        <span className="absolute left-[3px] top-[3px] text-[9px] leading-none font-bold tracking-[2px]">SW</span>
        <span className="absolute left-[6px] top-[16px] text-[7.500px] leading-none font-bold tracking-[-0.100px]">2018</span>
      </div>
    </div>
    <svg viewBox="0 0 16 16" className="w-[15px] h-[15px] ml-[270px] shrink-0" fill="none" stroke="#eee" strokeWidth="1.200">
      <circle cx="5" cy="7" r="2.500" />
      <path d="M1 15 Q1 10.500 5 10.500 Q8.500 10.500 9 15" />
      <circle cx="11" cy="3.500" r="2.500" />
      <path d="M8.500 8 Q14.500 5.500 15 11.500" />
    </svg>
    <svg viewBox="0 0 12 8" className="w-[11px] h-[8px] ml-[20px] shrink-0"><path d="M1 7 L6 1.500 L11 7" fill="none" stroke="#eee" strokeWidth="1.400" /></svg>
    <svg viewBox="0 0 16 14" className="w-[16px] h-[14px] ml-[10px] shrink-0">
      <path d="M2 3.500 H14 V10.500 H2Z M0.500 5.500 V8.500" fill="none" stroke="#eee" strokeWidth="1.200" />
      <rect x="3.500" y="5" width="3" height="4" fill="#eee" />
      <circle cx="11.500" cy="9" r="4" fill="#36a353" />
      <path d="M10 9 l1.200 1.500 l2 -3" stroke="#fff" fill="none" />
    </svg>
    <svg viewBox="0 0 16 16" className="w-[15px] h-[15px] ml-[7px] shrink-0" fill="none" stroke="#eee" strokeWidth="1.200">
      <path d="M1 6.500 L2.500 7 H6 L5 1 H6.500 L10 7 H13 Q15 7.200 15 8 Q15 8.800 13 9 H10 L6.500 15 H5 L6 9 H2.500 L1 9.500 L1.500 8Z" />
    </svg>
    <svg viewBox="0 0 16 14" className="w-[15px] h-[13px] ml-[7px] shrink-0" fill="none" stroke="#eee" strokeWidth="1.200">
      <path d="M1 5 H3.500 L7 2 V12 L3.500 9 H1Z M9 5 Q10.500 7 9 9" />
      <path d="M11 3.500 Q13.500 7 11 10.500 M13 2 Q16.500 7 13 12" stroke="#777" />
    </svg>
    <div className="w-[68px] text-center text-[11px] leading-[17px] tracking-[-0.320px] whitespace-nowrap shrink-0">
      <div>5:44 AM</div>
      <div>9/15/2022</div>
    </div>
    <div className="relative ml-[6px] w-[24px] h-[24px] shrink-0">
      <svg viewBox="0 0 24 24" className="w-[24px] h-[24px]">
        <path d="M1 3 H15.500 V15 H8 L5 18 V15 H1Z" fill="#fff" />
        <path d="M3.500 6.200H13M3.500 9H13M3.500 11.800H10" stroke="#333" strokeWidth="1.200" />
        <circle cx="15.500" cy="15.500" r="7" fill="#3a3a3a" stroke="#8a8a8a" />
      </svg>
      <span className="absolute left-[12px] top-[10px] text-[11px] leading-none font-bold">4</span>
    </div>
    <div className="ml-auto mr-[1px] w-px h-full bg-[#555]" />
  </div>
);

const App = () => (
  <div className="w-[1280px] h-[720px] flex flex-col overflow-hidden bg-[#f7f7f7] border-x border-black font-['Noto_Sans','Open_Sans',sans-serif]">
    <TitleBar />
    <Ribbon />
    <div className="h-[556px] flex shrink-0">
      <div className="w-[992px] flex flex-col shrink-0">
        <div className="grid grid-cols-[216px_776px] grid-rows-[21px_520px]">
          <BearingModel />
          <CommandTabs />
          <DocumentButtons />
          <FeatureTree />
          <ViewToolbar />
          <PanelHandle />
          <PaneTabs />
        </div>
        <ModelTabs />
      </div>
      <TaskPane />
    </div>
    <StatusBar />
    <Taskbar />
  </div>
);

export default App;
